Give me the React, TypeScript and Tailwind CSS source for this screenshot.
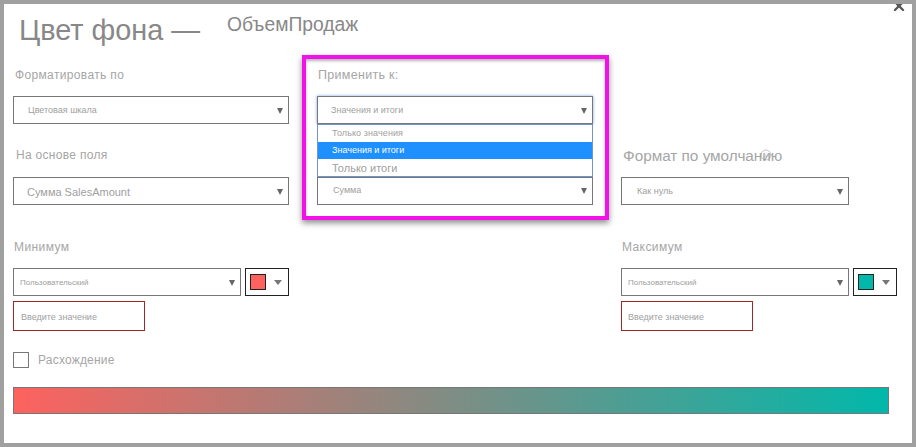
import { Info, X } from 'lucide-react'

const FONT = "font-['Liberation_Sans',Arial,sans-serif]"

function Caret({ className = '' }: { className?: string }) {
  return (
    <svg width="6" height="6" viewBox="0 0 6 6" className={`shrink-0 ${className}`}>
      <path d="M0 0H6L3 6Z" fill="#666666" />
    </svg>
  )
}

function Select({ text, width = 'w-[276px]', textClass = 'pl-[14px] pt-[1px] text-[9px]' }: { text: string; width?: string; textClass?: string }) {
  return (
    <div className={`flex h-[28px] items-center justify-between border border-[#777777] bg-white pr-[5px] text-[#a0a0a0] ${width} ${textClass}`}>
      <span>{text}</span>
      <Caret />
    </div>
  )
}

function ColorButton({ color }: { color: string }) {
  return (
    <div className="flex h-[28px] w-[44px] items-center gap-[8px] border border-[#222222] pl-[4px]">
      <div className="h-[16px] w-[16px] border border-[#222222]" style={{ backgroundColor: color }} />
      <svg width="8" height="5" viewBox="0 0 8 5">
        <path d="M0 0H8L4 5Z" fill="#777777" />
      </svg>
    </div>
  )
}

function ValueInput({ pad }: { pad: string }) {
  return (
    <div className={`mt-[5px] flex h-[30px] w-[132px] items-center border border-[#a4262c] pt-[3px] text-[9px] text-[#a0a0a0] ${pad}`}>
      Введите значение
    </div>
  )
}

function Range({ label, labelPad, color, inputPad }: { label: string; labelPad: string; color: string; inputPad: string }) {
  return (
    <div>
      <div className={`mt-[34px] mb-[13px] text-[12px] leading-[16px] tracking-[0.4px] text-[#a6a6a6] ${labelPad}`}>{label}</div>
      <div className="flex gap-[4px]">
        <Select text="Пользовательский" width="w-[228px]" textClass="pl-[6px] pt-[1px] text-[8px]" />
        <ColorButton color={color} />
      </div>
      <ValueInput pad={inputPad} />
    </div>
  )
}

export default function App() {
  return (
    <div className={`h-[447px] w-[916px] overflow-hidden bg-[#a0a0a0] p-[4px] ${FONT}`}>
      <div className="relative h-[439px] overflow-hidden bg-white pl-[9px]">
        <X className="absolute top-[-6px] right-[5px] text-[#555555]" size={16} strokeWidth={3.5} />

        {/* Title */}
        <div className="flex h-[60px] items-start pl-[6px] text-[#888888]">
          <span className="mt-[7px] text-[28.8px] leading-[38px]">Цвет фона —</span>
          <span className="mt-[11px] ml-[27px] text-[19.3px] leading-[20px]">ОбъемПродаж</span>
        </div>

        <div className="grid w-[884px] grid-cols-[276px_276px_276px] gap-x-[28px]">
          {/* Left column */}
          <div>
            <div className="mt-[3px] mb-[13px] pl-[2px] text-[12px] leading-[16px] tracking-[0.35px] text-[#a6a6a6]">Форматировать по</div>
            <Select text="Цветовая шкала" textClass="pl-[14px] pt-[2px] text-[9px]" />
            <div className="mt-[23px] mb-[14px] pl-[3px] text-[12px] leading-[16px] tracking-[0.3px] text-[#a6a6a6]">На основе поля</div>
            <Select text="Сумма SalesAmount" textClass="pl-[13px] pt-[2px] text-[11px]" />
          </div>

          {/* Middle column */}
          <div className="relative">
            <div className="mt-[3px] mb-[13px] pl-[1px] text-[12.5px] leading-[16px] tracking-[0.3px] text-[#a6a6a6]">Применить к:</div>
            <div className="shadow-[0_0_3px_#7aa5e6]">
              <Select text="Значения и итоги" textClass="pl-[13px] pt-[2px] text-[9px] border-[#5f86c4]" />
            </div>
            <div className="absolute top-[60px] left-0 z-10 w-[276px] border border-[#6f94cf] bg-white text-[#a0a0a0]">
              <div className="flex h-[17px] items-center pl-[14px] text-[9px] tracking-[0.1px]">Только значения</div>
              <div className="flex h-[17px] items-center bg-[#1e90ff] pl-[14px] text-[9px] text-white">Значения и итоги</div>
              <div className="flex h-[17px] items-center pl-[14px] pt-[1px] text-[11px]">Только итоги</div>
            </div>
            <div className="mt-[53px]">
              <Select text="Сумма" textClass="pl-[15px] text-[9px]" />
            </div>
            {/* Highlight frame */}
            <div className="pointer-events-none absolute top-[-9px] left-[-15px] z-20 h-[165px] w-[307px] border-[4px] border-[#f012e6] shadow-[0_3px_6px_rgba(0,0,0,0.45),inset_0_2px_3px_rgba(0,0,0,0.3)]" />
          </div>

          {/* Right column */}
          <div>
            <div className="relative mt-[84px] mb-[13px] w-fit pl-[2px] text-[15.3px] leading-[16px] text-[#a6a6a6]">
              Формат по умолчанию
              <Info className="absolute top-[1px] left-[139px] text-[#888888]" size={12} strokeWidth={1} />
            </div>
            <Select text="Как нуль" width="w-[228px]" textClass="pl-[15px] pt-[2px] text-[9px]" />
          </div>

          <Range label="Минимум" labelPad="pl-[1px]" color="#fd625e" inputPad="pl-[7px]" />
          <div />
          <Range label="Максимум" labelPad="pl-[1px]" color="#01b8aa" inputPad="pl-[6px]" />
        </div>

        {/* Divergence */}
        <div className="mt-[20px] flex h-[16px] items-center gap-[9px] pt-[1px] text-[12px] tracking-[0.2px] text-[#a6a6a6]">
          <div className="h-[16px] w-[16px] border border-[#777777]" />
          <span>Расхождение</span>
        </div>

        <div className="mt-[20px] h-[27px] w-[876px] border border-[#777777] bg-linear-to-r/srgb from-[#fd625e] to-[#01b8aa]" />
      </div>
    </div>
  )
}
